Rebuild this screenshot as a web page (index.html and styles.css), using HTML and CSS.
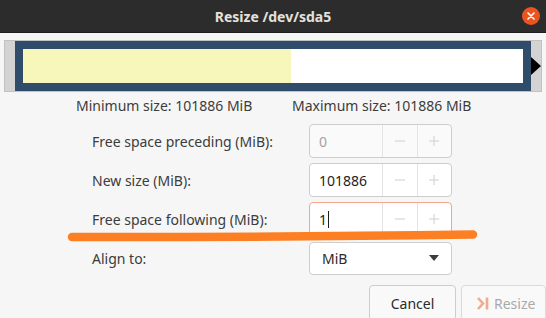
FILE: index.html
```html
<!DOCTYPE html>
<html lang="en">
<head>
    <meta charset="UTF-8">
    <meta name="viewport" content="width=device-width, initial-scale=1.0">
    <title>Resize /dev/sda5</title>
    <link rel="stylesheet" href="styles.css">
</head>
<body>
    <div class="window">
        <header class="titlebar">
            <span></span>
            <h1 class="title">Resize /dev/sda5</h1>
            <button class="close" aria-label="Close">
                <svg width="8" height="8" viewBox="0 0 8 8"><path d="M1 1L7 7M7 1L1 7" stroke="#fff" stroke-width="1.6" stroke-linecap="round"/></svg>
            </button>
        </header>

        <div class="partmap">
            <div class="part">
                <div class="used"></div>
                <div class="unused"></div>
            </div>
            <div class="arrow"></div>
        </div>

        <div class="sizes">
            <span class="size-min">Minimum size: 101886 MiB</span>
            <span>Maximum size: 101886 MiB</span>
        </div>

        <div class="fields">
            <label>Free space preceding (MiB):</label>
            <div class="spin disabled">
                <span class="spin-value">0</span>
                <span class="spin-btn"><svg width="12" height="12" viewBox="0 0 12 12"><path d="M1 6H11" stroke="currentColor"/></svg></span>
                <span class="spin-btn"><svg width="12" height="12" viewBox="0 0 12 12"><path d="M1 6H11M6 1V11" stroke="currentColor"/></svg></span>
            </div>

            <label>New size (MiB):</label>
            <div class="spin">
                <span class="spin-value">101886</span>
                <span class="spin-btn"><svg width="12" height="12" viewBox="0 0 12 12"><path d="M1 6H11" stroke="currentColor"/></svg></span>
                <span class="spin-btn"><svg width="12" height="12" viewBox="0 0 12 12"><path d="M1 6H11M6 1V11" stroke="currentColor"/></svg></span>
            </div>

            <label>Free space following (MiB):</label>
            <div class="spin focused">
                <span class="spin-value">1<span class="caret"></span></span>
                <span class="spin-btn"><svg width="12" height="12" viewBox="0 0 12 12"><path d="M1 6H11" stroke="currentColor"/></svg></span>
                <span class="spin-btn"><svg width="12" height="12" viewBox="0 0 12 12"><path d="M1 6H11M6 1V11" stroke="currentColor"/></svg></span>
            </div>

            <label>Align to:</label>
            <div class="combo">
                <span>MiB</span>
                <svg width="10" height="6" viewBox="0 0 10 6"><path d="M0 0H10L5 6Z" fill="#3c3c3c"/></svg>
            </div>
        </div>

        <div class="actions">
            <button class="btn">Cancel</button>
            <button class="btn disabled">
                <svg width="14" height="15" viewBox="0 0 14 15"><path d="M2 2L7 7.5L2 13" fill="none" stroke="#f4a98c" stroke-width="2.6"/><path d="M11 1.5V13.5" stroke="#f4a98c" stroke-width="2.6"/></svg>
                Resize
            </button>
        </div>

        <!-- hand drawn marker line -->
        <svg class="marker" width="546" height="318" viewBox="0 0 546 318">
            <path d="M72 237 Q 260 237.5 473 234.5" fill="none" stroke="#fd7f23" stroke-width="8.5" stroke-linecap="round"/>
        </svg>
    </div>
</body>
</html>
```

FILE: styles.css
```css
* {
    box-sizing: border-box;
}

body {
    margin: 0;
    background-color: #f6f6f6;
    font-family: "Noto Sans", sans-serif;
    font-size: 14px;
    color: #3c3c3c;
    overflow: hidden;
}

.window {
    position: relative;
    width: 546px;
    height: 318px;
}

.titlebar {
    height: 33px;
    display: grid;
    grid-template-columns: 1fr auto 1fr;
    align-items: center;
    background-color: #2c2c2c;
    border-bottom: 1px solid #1e1e1e;
}

.title {
    margin: 0;
    font-size: 14px;
    font-weight: bold;
    color: #e4e1dc;
}

.close {
    justify-self: end;
    width: 18px;
    height: 18px;
    margin-right: 6px;
    padding: 0;
    border: none;
    border-radius: 50%;
    background-color: #e95420;
    display: flex;
    align-items: center;
    justify-content: center;
}

.partmap {
    margin: 7px 4px 0 4px;
    height: 52px;
    padding-left: 10px;
    background-color: #d3d3d3;
    border: 1px solid #c2c2c2;
    display: flex;
    align-items: center;
}

.part {
    width: 516px;
    height: 50px;
    padding: 8px;
    background-color: #2f4c6a;
    display: flex;
}

.used {
    width: 268px;
    background-color: #f7f7bb;
}

.unused {
    flex: 1;
    background-color: #fff;
}

.arrow {
    width: 0;
    height: 0;
    border-top: 9px solid transparent;
    border-bottom: 9px solid transparent;
    border-left: 10px solid #000;
}

.sizes {
    display: flex;
    padding-left: 76px;
    margin-top: 2px;
    height: 23px;
    align-items: center;
}

.size-min {
    width: 216px;
}

.fields {
    display: grid;
    grid-template-columns: 217px 143px;
    grid-auto-rows: 34px;
    row-gap: 5px;
    margin: 7px 0 0 92px;
    align-items: center;
}

.spin {
    height: 34px;
    display: flex;
    border: 1px solid #cdcdcd;
    border-radius: 4px;
    background-color: #fff;
}

.spin.disabled {
    background-color: #fafafa;
}

.spin.focused {
    border-color: #f3a68b;
}

.spin-value {
    width: 72px;
    padding-left: 9px;
    display: flex;
    align-items: center;
    color: #1e1e1e;
}

.spin.disabled .spin-value {
    color: #a8a29e;
}

.caret {
    width: 1px;
    height: 17px;
    margin-left: 1px;
    background-color: #1e1e1e;
}

.spin-btn {
    flex: 1;
    display: flex;
    align-items: center;
    justify-content: center;
    border-left: 1px solid #e4e4e4;
    color: #cfcfcf;
}

.combo {
    height: 33px;
    display: flex;
    align-items: center;
    justify-content: space-between;
    padding: 0 12px 0 12px;
    border: 1px solid #cdcdcd;
    border-radius: 4px;
    background-color: #fff;
    color: #2b2b2b;
}

.actions {
    display: flex;
    justify-content: flex-end;
    gap: 5px;
    margin-top: 10px;
}

.btn {
    width: 87px;
    height: 36px;
    font-family: inherit;
    font-size: 14px;
    color: #2b2b2b;
    background-color: #f9f9f9;
    border: 1px solid #cdcdcd;
    border-radius: 4px;
    display: flex;
    align-items: center;
    justify-content: center;
    gap: 4px;
}

.btn.disabled {
    width: 85px;
    color: #a9a9a9;
    border-color: #dadada;
    justify-content: flex-start;
    padding-left: 14px;
}

.marker {
    position: absolute;
    left: 0;
    top: 0;
    pointer-events: none;
}
```
